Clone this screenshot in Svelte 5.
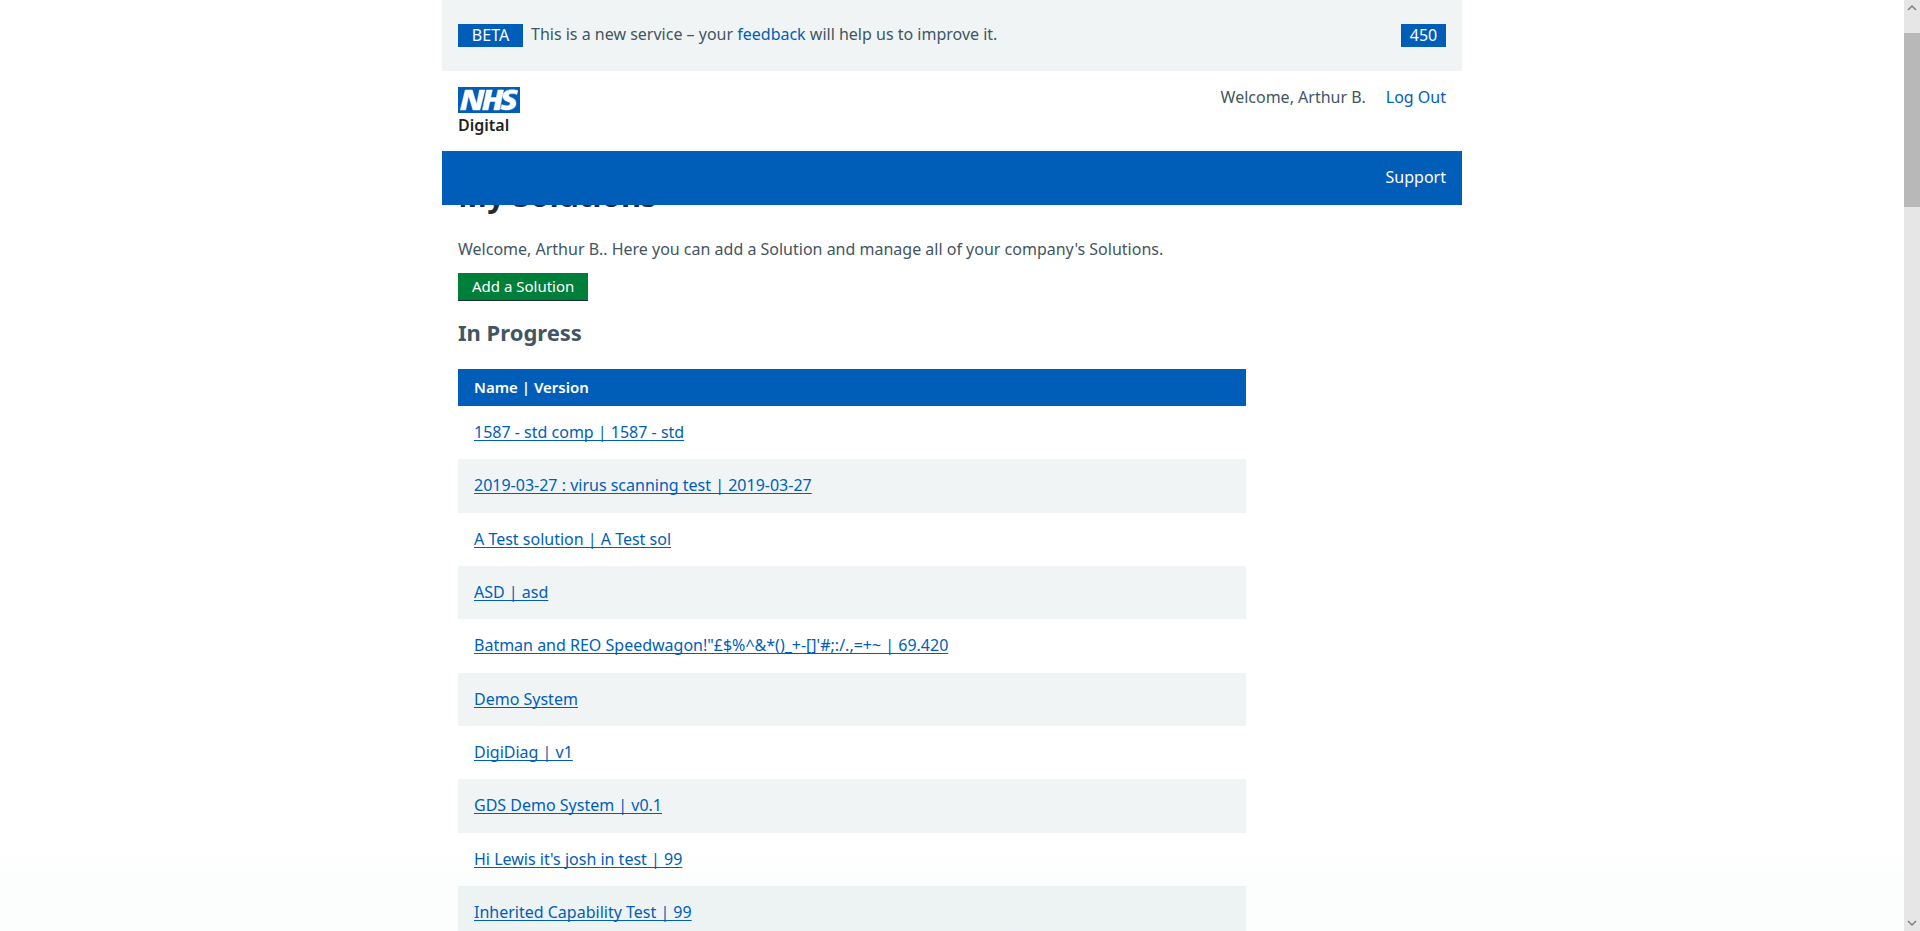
<script>
  const solutions = [
    '1587 - std comp | 1587 - std',
    '2019-03-27 : virus scanning test | 2019-03-27',
    'A Test solution | A Test sol',
    'ASD | asd',
    'Batman and REO Speedwagon!"£$%^&*()_+-[]\'#;:/.,=+~ | 69.420',
    'Demo System',
    'DigiDiag | v1',
    'GDS Demo System | v0.1',
    "Hi Lewis it's josh in test | 99",
    'Inherited Capability Test | 99'
  ];
</script>

<div class="viewport">
  <div class="page">
    <header>
      <div class="beta">
        <strong class="tag wide">BETA</strong>
        <p>This is a new service – your <a href="#feedback">feedback</a> will help us to improve it.</p>
        <span class="tag count">450</span>
      </div>
      <div class="brand">
        <a class="logo" href="#home" aria-label="NHS Digital">
          <svg viewBox="0 0 62 26" width="62" height="26" aria-hidden="true">
            <path fill="#005eb8" d="M0 0h62v26H0z" />
            <path
              fill="#fff"
              stroke="#fff"
              stroke-width=".5"
              d="M7.200 3h7.100l4.300 14.200L21.500 3h5.400l-5 20h-6.900L10.600 8.800 7.700 23H2.300zM28.600 3h5.700l-1.600 7.600h5.600L39.900 3h5.700l-4.200 20h-5.700l1.800-8.500h-5.600L30.100 23h-5.700zM58.900 7.500c-1.100-.5-2.500-.9-4.500-.9-2.100 0-3.700.3-3.700 1.900 0 2.700 7.300 1.700 7.300 7.600 0 5.400-5 6.900-9.500 6.900-2 0-4.300-.5-6-1l1.400-4.400c1 .7 3.100 1.100 4.600 1.100 1.500 0 3.700-.3 3.700-2 0-2.900-7.300-1.800-7.300-7.300 0-5.100 4.500-6.600 8.900-6.600 2.400 0 4.700.2 5.900.8z"
            />
          </svg>
          <span>Digital</span>
        </a>
        <div class="account">
          <span>Welcome, Arthur B.</span>
          <a href="#logout">Log Out</a>
        </div>
      </div>
      <nav><a href="#support">Support</a></nav>
    </header>

    <main>
      <h1>My Solutions</h1>
      <p class="intro">Welcome, Arthur B.. Here you can add a Solution and manage all of your company's Solutions.</p>
      <button type="button">Add a Solution</button>
      <h2>In Progress</h2>
      <table>
        <thead><tr><th scope="col">Name | Version</th></tr></thead>
        <tbody>
          {#each solutions as name}
            <tr><td><a href="#solution">{name}</a></td></tr>
          {/each}
        </tbody>
      </table>
    </main>
    <div class="fade" aria-hidden="true"></div>
  </div>

  <div class="scrollbar" aria-hidden="true">
    <svg viewBox="0 0 16 16" width="16" height="16"><path d="M4 10l4-4 4 4" /></svg>
    <div class="track"><div class="thumb"></div></div>
    <svg viewBox="0 0 16 16" width="16" height="16"><path d="M4 6l4 4 4-4" /></svg>
  </div>
</div>

<style>
  :global(body) {
    margin: 0;
    overflow: hidden;
    background: #fff;
  }
  .viewport {
    display: flex;
    height: 100vh;
    overflow: hidden;
    color: #425563;
    font: 16px/24px 'Noto Sans', sans-serif;
  }
  .page {
    position: relative;
    flex: 1;
    min-width: 0;
    overflow: hidden;
  }
  /* Translucent tint over the foot of the window */
  .fade {
    position: absolute;
    right: 0;
    bottom: 0;
    left: 0;
    height: 76px;
    background: linear-gradient(rgb(0 130 120 / 0.004), rgb(0 130 140 / 0.012) 24px);
    pointer-events: none;
  }
  header,
  main {
    box-sizing: border-box;
    max-width: 1020px;
    margin: 0 auto;
  }
  header {
    position: relative;
    z-index: 1;
    background: #fff;
  }
  a {
    color: #005eb8;
    text-decoration: none;
  }
  p {
    margin: 0;
  }
  .beta {
    display: flex;
    align-items: flex-start;
    gap: 8px;
    padding: 24px 16px;
    background: #f0f4f5;
  }
  .beta p {
    flex: 1;
    margin-top: -2px;
    padding-bottom: 1px;
  }
  .tag {
    background: #005eb8;
    color: #fff;
    font-weight: 400;
    line-height: 23px;
    text-align: center;
  }
  .wide {
    width: 65px;
  }
  .count {
    width: 45px;
  }
  .brand {
    display: flex;
    justify-content: space-between;
    height: 48px;
    padding: 16px;
  }
  .logo svg,
  .logo span {
    display: block;
  }
  .logo span {
    color: #231f20;
    font-weight: 600;
  }
  .account {
    display: flex;
    gap: 20px;
    line-height: 20px;
  }
  nav {
    padding: 14px 16px 16px;
    background: #005eb8;
    text-align: right;
  }
  nav a {
    color: #fff;
  }
  main {
    padding: 0 16px;
  }
  h1 {
    margin: -32px 0 20px;
    color: #212b32;
    font-size: 31px;
    line-height: 44px;
  }
  .intro {
    margin-bottom: 12px;
  }
  button {
    display: block;
    padding: 0 14px;
    border: 0;
    border-bottom: 1px solid #212b32;
    background: #007f3b;
    color: #fff;
    font: 15px/27px 'Noto Sans', sans-serif;
  }
  h2 {
    margin: 15px 0 21px;
    font-size: 22px;
    line-height: 32px;
  }
  table {
    width: calc(100% - 200px);
    border-collapse: collapse;
  }
  th,
  td {
    padding: 16px;
    line-height: 1.333;
    text-align: left;
  }
  th {
    padding: 8px 16px;
    background: #005eb8;
    color: #fff;
    font-size: 15px;
    font-weight: 600;
    line-height: 21px;
  }
  tbody tr:nth-child(even) {
    background: #f0f4f5;
  }
  td a {
    text-decoration: underline;
    text-decoration-skip-ink: none;
    text-decoration-thickness: 1px;
    text-underline-offset: 2px;
  }
  .scrollbar {
    display: flex;
    flex-direction: column;
    width: 16px;
    background: #e6e6e6;
  }
  .scrollbar path {
    fill: none;
    stroke: #808080;
    stroke-width: 1.5;
  }
  .track {
    flex: 1;
    padding-top: 17px;
  }
  .thumb {
    height: 19.700%;
    background: #b8b8b8;
  }
</style>
